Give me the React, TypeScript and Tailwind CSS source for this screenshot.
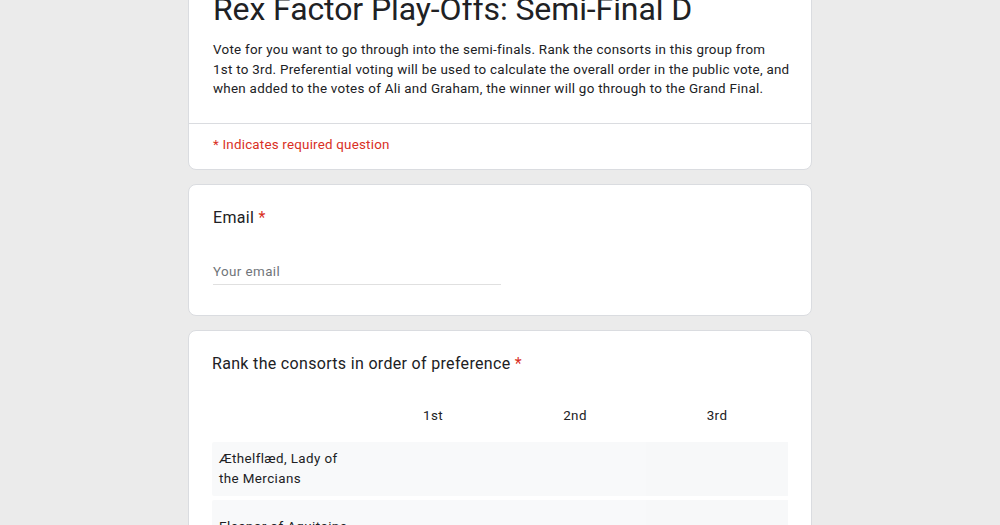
import React from "react";

const font = { fontFamily: "Roboto, 'Noto Sans', Arial, sans-serif" };

const rows = ["Æthelflæd, Lady of the Mercians", "Eleanor of Aquitaine", "Anne Boleyn"];

export default function App() {
  return (
    <div
      className="min-h-[525px] h-[525px] overflow-hidden bg-[#ebebeb] flex flex-col items-center gap-[14px] text-[#202124]"
      style={font}
    >
      {/* Header card */}
      <div className="w-[624px] -mt-[32px] bg-white rounded-[8px] border border-[#dadce0] shrink-0">
        <div className="px-[24px] pt-[21px] pb-[24px]">
          <h1 className="text-[32px] leading-[38px] font-normal tracking-[-0.1px]">
            Rex Factor Play-Offs: Semi-Final D
          </h1>
          <p className="mt-[12px] text-[13.4px] leading-[19.5px] tracking-[0.27px] whitespace-nowrap">
            Vote for you want to go through into the semi-finals. Rank the consorts in this group from
            <br />
            1st to 3rd. Preferential voting will be used to calculate the overall order in the public vote, and
            <br />
            when added to the votes of Ali and Graham, the winner will go through to the Grand Final.
          </p>
        </div>
        <div className="border-t border-[#dadce0] px-[24px] pt-[8px] pb-[13px]">
          <span className="text-[13.4px] leading-[20px] tracking-[0.2px] text-[#d93025]">
            * Indicates required question
          </span>
        </div>
      </div>

      {/* Email card */}
      <div className="w-[624px] bg-white rounded-[8px] border border-[#dadce0] shrink-0 px-[24px] pt-[21px] pb-[30px]">
        <div className="text-[16px] leading-[24px] tracking-[0.3px]">
          Email <span className="text-[#d93025]">*</span>
        </div>
        <div className="mt-[29px] w-[288px] border-b border-[#e0e0e0] pb-[1px]">
          <span className="text-[13.4px] leading-[20px] tracking-[0.4px] text-[#70757a]">Your email</span>
        </div>
      </div>

      {/* Grid card */}
      <div className="w-[624px] bg-white rounded-[8px] border border-[#dadce0] shrink-0 px-[23px] pt-[21px] pb-[24px]">
        <div className="text-[16px] leading-[24px] tracking-[0.32px]">
          Rank the consorts in order of preference <span className="text-[#d93025]">*</span>
        </div>
        <div className="mt-[16px]">
          <div className="grid grid-cols-[150px_142px_142px_142px] h-[50px] items-center text-[13.4px] tracking-[0.4px] text-center">
            <div />
            <div>1st</div>
            <div>2nd</div>
            <div>3rd</div>
          </div>
          <div className="flex flex-col gap-[4px]">
            {rows.map((r) => (
              <div key={r} className="grid grid-cols-[150px_142px_142px_142px] min-h-[54px] bg-[#f8f9fa] rounded-[2px]">
                <div className="pl-[7px] pr-[10px] py-[7px] text-[13.4px] leading-[19.5px] tracking-[0.4px] flex items-center">
                  {r}
                </div>
                <div />
                <div />
                <div className="bg-[#f7f8f9]" />
              </div>
            ))}
          </div>
        </div>
      </div>
    </div>
  );
}
